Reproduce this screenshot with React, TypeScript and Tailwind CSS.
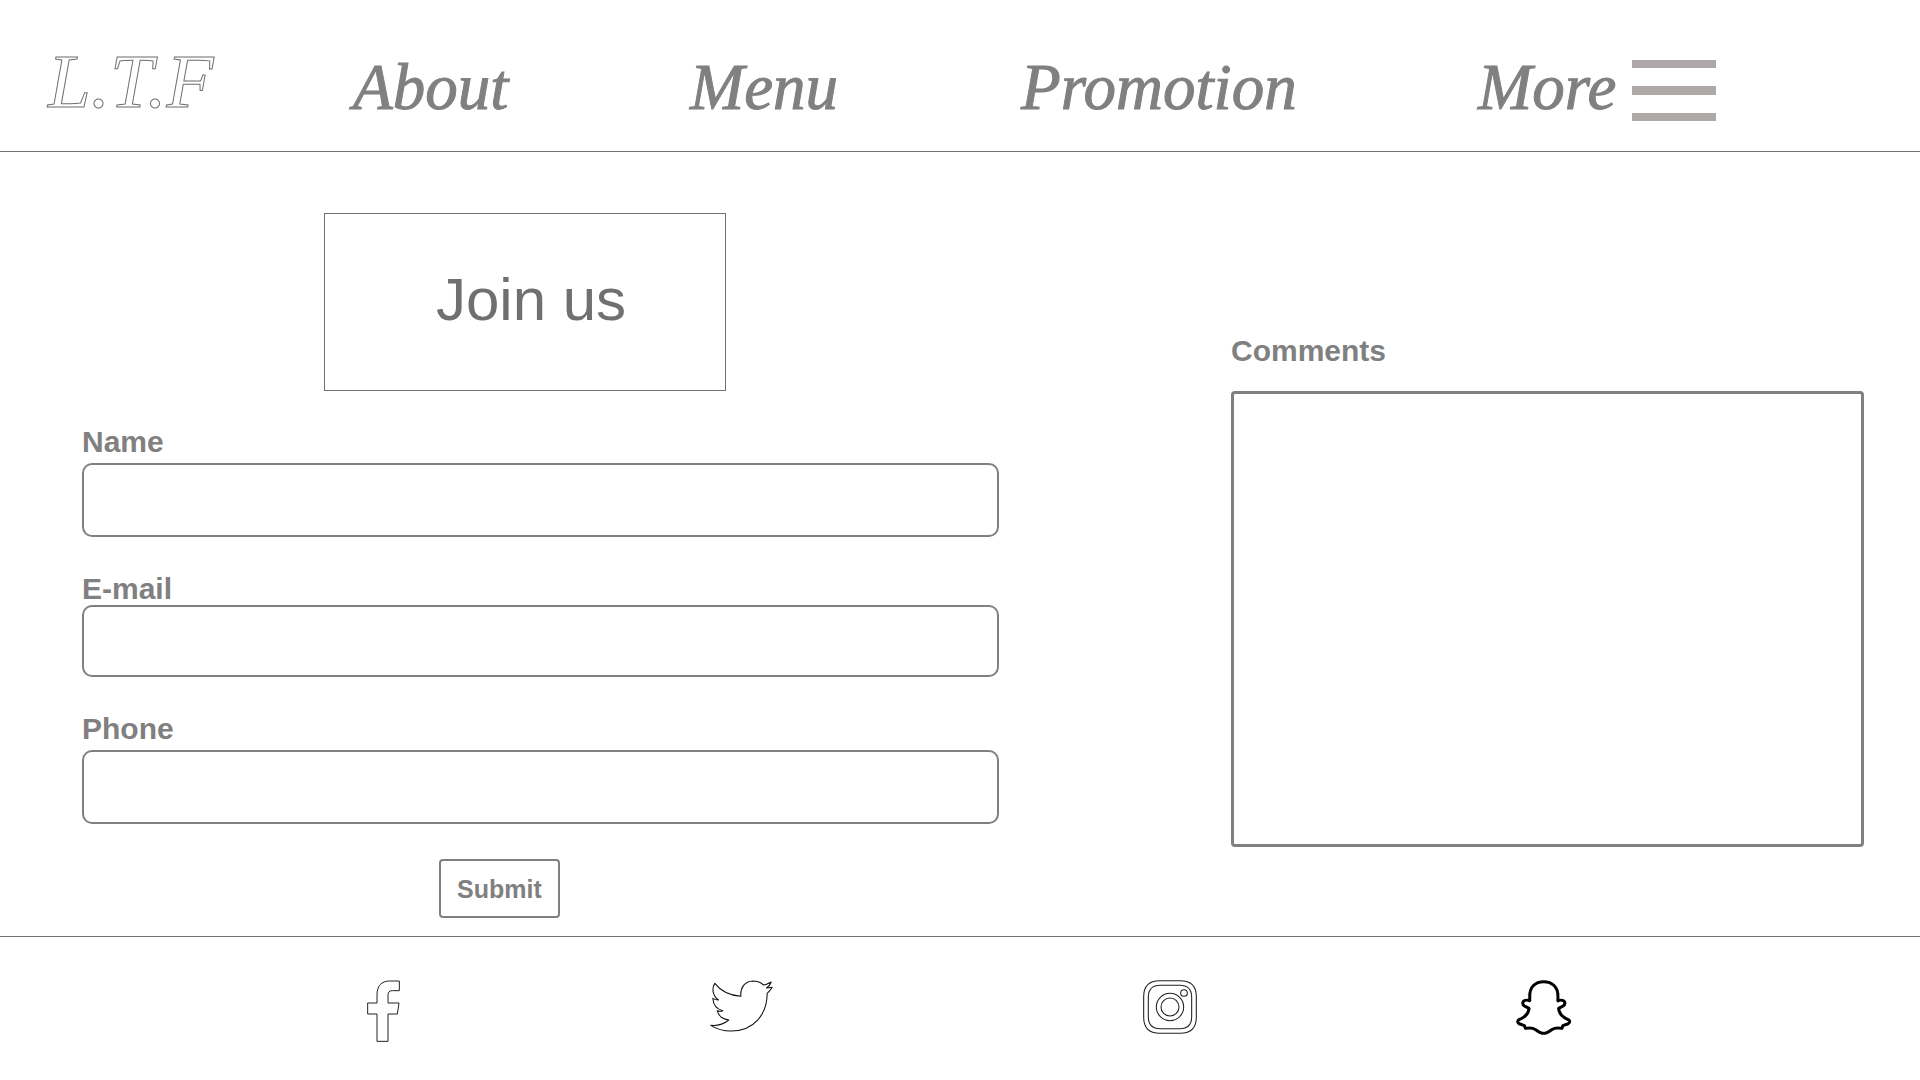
const navItems = [
  { label: "About", href: "#about" },
  { label: "Menu", href: "#menu" },
  { label: "Promotion", href: "#promotion" },
];

const navText =
  "font-['Liberation_Serif',serif] text-[65px] leading-[72px] italic text-[#808080] [-webkit-text-stroke:1px_#808080]";
const labelText = "block text-[30px] leading-[30px] font-bold text-[#808080]";

const fields = [
  { id: "name", label: "Name", type: "text", box: "mt-[6px] h-[74px]" },
  { id: "email", label: "E-mail", type: "email", box: "mt-px h-[72px]" },
  { id: "phone", label: "Phone", type: "tel", box: "mt-[6px] h-[74px]" },
];

function FacebookIcon() {
  return (
    <svg viewBox="51 43 99 189" className="h-[63px] w-[33px]" fill="none" stroke="#222" strokeWidth="3">
      <path d="M81 227V145H53V112H81V88C81 61 94 46 119 46H148V75H127C117 75 114 80 114 91V112H147L142 145H114V227Z" />
    </svg>
  );
}

function TwitterIcon() {
  return (
    <svg viewBox="32 42 188 156" className="h-[52px] w-[63px]" fill="none" stroke="#111" strokeWidth="3.2" strokeLinejoin="round">
      <path d="M46 52C62 73 91 88 124 91C122 64 136 46 160 45C173 45 184 49 192 57C200 56 208 52 215 48C213 55 208 61 201 66C207 66 213 65 218 64C214 71 209 77 203 82C203 143 165 195 94 195C72 195 51 189 34 178C55 180 73 174 88 162C70 160 57 149 53 134C59 136 65 136 70 134C52 130 41 116 40 97C45 100 51 102 57 102C39 89 36 67 46 52Z" />
    </svg>
  );
}

function InstagramIcon() {
  return (
    <svg viewBox="41 43 162 162" className="size-[54px]" fill="none" stroke="#222" strokeWidth="3.2">
      <path d="M91 45H153C184 45 201 62 201 93V155C201 186 184 203 153 203H91C60 203 43 186 43 155V93C43 62 60 45 91 45Z" />
      <path d="M93 59H151C176 59 187 70 187 95V153C187 178 176 189 151 189H93C68 189 57 178 57 153V95C57 70 68 59 93 59Z" />
      <circle cx="122" cy="124" r="41" />
      <circle cx="122" cy="124" r="27" />
      <circle cx="164" cy="82" r="10" />
    </svg>
  );
}

function SnapchatIcon() {
  return (
    <svg viewBox="32 44 168 166" className="h-[55px] w-[56px]" fill="none" stroke="#000" strokeWidth="9" strokeLinejoin="round">
      <path d="M115 49C89 49 73 66 73 92V107C66 103 51 104 52 115C53 124 64 125 71 130C69 148 53 159 40 164C35 167 36 173 41 176L57 182L60 190C72 188 82 188 91 194C99 200 106 205 115 205C124 205 131 200 139 194C148 188 158 188 170 190L173 182L189 176C195 173 195 167 190 164C177 159 162 148 160 130C167 125 178 124 179 115C180 104 165 103 158 107V92C158 66 141 49 115 49Z" />
    </svg>
  );
}

const socials = [
  { name: "Facebook", Icon: FacebookIcon },
  { name: "Twitter", Icon: TwitterIcon },
  { name: "Instagram", Icon: InstagramIcon },
  { name: "Snapchat", Icon: SnapchatIcon },
];

export default function App() {
  return (
    <div className="min-h-screen bg-white font-['Liberation_Sans',sans-serif]">
      <header className="grid grid-cols-[353fr_337fr_331fr_457fr_442fr] items-start border-b border-[#707070] pb-[26px]">
        <a
          href="#home"
          className="pt-[37px] pl-12 font-['Liberation_Serif',serif] text-[77px] leading-[88px] italic text-transparent [-webkit-text-stroke:1px_#707070]"
        >
          L.T.F
        </a>
        <nav className="col-span-4 grid grid-cols-subgrid pt-[51px]">
          {navItems.map((item) => (
            <a key={item.label} href={item.href} className={navText}>
              {item.label}
            </a>
          ))}
          <button type="button" className="flex items-start gap-4 text-left">
            <span className={navText}>More</span>
            <span className="mt-[9px] flex w-[84px] flex-col gap-[18px]">
              <span className="h-[8px] bg-[#aea8a8]" />
              <span className="h-[9px] bg-[#aea8a8]" />
              <span className="h-[8px] bg-[#aea8a8]" />
            </span>
          </button>
        </nav>
      </header>

      <form className="grid grid-cols-[82fr_917fr_232fr_633fr_56fr] pb-[18px]">
        <div className="col-start-2 flex flex-col pt-[61px]">
          <h1 className="mr-[273px] ml-[242px] flex h-[178px] items-center justify-center border border-[#707070] pb-[5px] pl-[12px] text-[60px] leading-[60px] text-[#707070]">
            Join us
          </h1>
          <div className="mt-[36px] flex flex-col gap-[37px]">
            {fields.map((field) => (
              <div key={field.id}>
                <label htmlFor={field.id} className={labelText}>
                  {field.label}
                </label>
                <input
                  id={field.id}
                  name={field.id}
                  type={field.type}
                  className={`block w-full rounded-[10px] border-2 border-[#808080] px-4 text-2xl text-[#707070] ${field.box}`}
                />
              </div>
            ))}
          </div>
          <button
            type="submit"
            className="mt-[35px] ml-[357px] h-[59px] self-start rounded-[4px] border-2 border-[#808080] px-4 text-[25px] leading-[30px] font-bold text-[#808080]"
          >
            Submit
          </button>
        </div>
        <div className="col-start-4 pt-[184px]">
          <label htmlFor="comments" className={labelText}>
            Comments
          </label>
          <textarea
            id="comments"
            name="comments"
            className="mt-[25px] block h-[456px] w-full resize-none rounded-[4px] border-3 border-[#808080] p-4 text-2xl text-[#707070]"
          />
        </div>
      </form>

      <footer className="grid grid-cols-[367fr_343fr_433fr_373fr_404fr] items-start border-t border-[#707070] pt-[43px] pb-8">
        {socials.map(({ name, Icon }) => (
          <a key={name} href="#social" aria-label={name} className="justify-self-start first:col-start-2">
            <Icon />
          </a>
        ))}
      </footer>
    </div>
  );
}
